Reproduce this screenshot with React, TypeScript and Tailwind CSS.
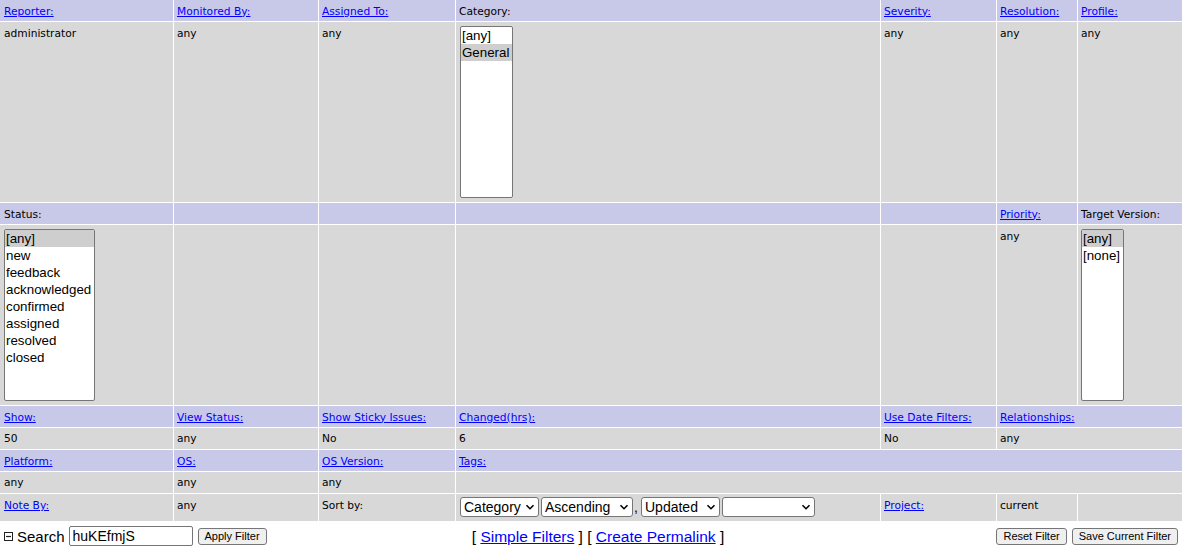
import React from 'react'

const head = 'bg-[#c8c8e8] flex items-center pl-[3px] pt-px'
const head0 = 'bg-[#c8c8e8] flex items-center pl-1 pt-px'
const cell = 'bg-[#d8d8d8] pl-[3px]'
const cell0 = 'bg-[#d8d8d8] pl-1'

function L({ children }: { children: React.ReactNode }) {
  return <a className="text-[#0000ff] underline cursor-pointer">{children}</a>
}

function ListBox({ items, selected, width }: { items: string[]; selected: number; width: string }) {
  return (
    <div
      className={`${width} h-[172px] bg-white border border-[#767676] rounded-[2px] overflow-hidden text-[13.33px] leading-[17px] text-black`}
      style={{ fontFamily: '"Liberation Sans", Arial, sans-serif' }}
    >
      {items.map((it, i) => (
        <div key={it} className={`pl-[1px] whitespace-nowrap ${i === selected ? 'bg-[#cecece]' : ''}`}>
          {it}
        </div>
      ))}
    </div>
  )
}

function Drop({ label, width }: { label: string; width: string }) {
  return (
    <div
      className={`${width} h-[20px] bg-white border border-[#767676] rounded-[3px] flex items-center justify-between pl-[3px] pr-[3px] text-[14px] text-black`}
      style={{ fontFamily: '"Liberation Sans", Arial, sans-serif' }}
    >
      <span className="whitespace-nowrap">{label}</span>
      <svg width="10" height="10" viewBox="0 0 10 10" className="flex-none">
        <path d="M1.5 3.2 L5 6.7 L8.5 3.2" fill="none" stroke="#000" strokeWidth="1.6" />
      </svg>
    </div>
  )
}

function Btn({ children }: { children: React.ReactNode }) {
  return (
    <button
      className="h-[17px] px-[6px] bg-[#efefef] border border-[#767676] rounded-[3px] text-[11px] leading-none text-black"
      style={{ fontFamily: '"Liberation Sans", Arial, sans-serif' }}
    >
      {children}
    </button>
  )
}

export default function App() {
  return (
    <div
      className="w-[1182px] h-[551px] bg-white text-black text-[10.67px] leading-[13px] overflow-hidden"
      style={{ fontFamily: '"DejaVu Sans", Verdana, sans-serif' }}
    >
      <div className="grid grid-cols-[173px_144px_136px_424px_115px_80px_1fr] grid-rows-[21px_180px_21px_180px_21px_21px_21px_21px_27px] gap-px bg-white">
        {/* row 1 */}
        <div className={head0}><L>Reporter:</L></div>
        <div className={head}><L>Monitored By:</L></div>
        <div className={head}><L>Assigned To:</L></div>
        <div className={head}>Category:</div>
        <div className={head}><L>Severity:</L></div>
        <div className={head}><L>Resolution:</L></div>
        <div className={head}><L>Profile:</L></div>

        <div className={`${cell0} pt-[5px]`}>administrator</div>
        <div className={`${cell} pt-[5px]`}>any</div>
        <div className={`${cell} pt-[5px]`}>any</div>
        <div className={`${cell} pt-[4px] pl-[4px]`}>
          <ListBox items={['[any]', 'General']} selected={1} width="w-[53px]" />
        </div>
        <div className={`${cell} pt-[5px]`}>any</div>
        <div className={`${cell} pt-[5px]`}>any</div>
        <div className={`${cell} pt-[5px]`}>any</div>

        {/* row 2 */}
        <div className={head0}>Status:</div>
        <div className={head} />
        <div className={head} />
        <div className={head} />
        <div className={head} />
        <div className={head}><L>Priority:</L></div>
        <div className={head}>Target Version:</div>

        <div className={`${cell0} pt-[4px]`}>
          <ListBox
            items={['[any]', 'new', 'feedback', 'acknowledged', 'confirmed', 'assigned', 'resolved', 'closed']}
            selected={0}
            width="w-[91px]"
          />
        </div>
        <div className={cell} />
        <div className={cell} />
        <div className={cell} />
        <div className={cell} />
        <div className={`${cell} pt-[5px]`}>any</div>
        <div className={`${cell} pt-[4px]`}>
          <ListBox items={['[any]', '[none]']} selected={0} width="w-[43px]" />
        </div>

        {/* row 3 */}
        <div className={head0}><L>Show:</L></div>
        <div className={head}><L>View Status:</L></div>
        <div className={head}><L>Show Sticky Issues:</L></div>
        <div className={head}><L>Changed(hrs):</L></div>
        <div className={head}><L>Use Date Filters:</L></div>
        <div className={`${head} col-span-2`}><L>Relationships:</L></div>

        <div className={`${cell0} flex items-center`}>50</div>
        <div className={`${cell} flex items-center`}>any</div>
        <div className={`${cell} flex items-center`}>No</div>
        <div className={`${cell} flex items-center`}>6</div>
        <div className={`${cell} flex items-center`}>No</div>
        <div className={`${cell} col-span-2 flex items-center`}>any</div>

        {/* row 4 */}
        <div className={head0}><L>Platform:</L></div>
        <div className={head}><L>OS:</L></div>
        <div className={head}><L>OS Version:</L></div>
        <div className={`${head} col-span-4`}><L>Tags:</L></div>

        <div className={`${cell0} flex items-center`}>any</div>
        <div className={`${cell} flex items-center`}>any</div>
        <div className={`${cell} flex items-center`}>any</div>
        <div className={`${cell} col-span-4`} />

        {/* row 5 */}
        <div className={`${cell0} pt-[5px]`}><L>Note By:</L></div>
        <div className={`${cell} pt-[5px]`}>any</div>
        <div className={`${cell} pt-[5px]`}>Sort by:</div>
        <div className={`${cell} pt-[3px] pl-[4px] flex items-start`}>
          <Drop label="Category" width="w-[79px]" />
          <div className="w-[2px]" />
          <Drop label="Ascending" width="w-[92px]" />
          <span className="text-[14px] leading-[20px] w-[8px] pl-[1px]" style={{ fontFamily: '"Liberation Sans", Arial, sans-serif' }}>,</span>
          <Drop label="Updated" width="w-[79px]" />
          <div className="w-[2px]" />
          <Drop label="" width="w-[93px]" />
        </div>
        <div className={`${cell} pt-[5px]`}><L>Project:</L></div>
        <div className={`${cell} pt-[5px]`}>current</div>
        <div className={cell} />
      </div>

      {/* bottom bar */}
      <div
        className="h-[30px] grid grid-cols-[1fr_auto_1fr] items-center text-[15px]"
        style={{ fontFamily: '"Liberation Sans", Arial, sans-serif' }}
      >
        <div className="flex items-center pl-1">
          <svg width="9" height="9" viewBox="0 0 9 9" className="flex-none mt-[1px]">
            <rect x="0.5" y="0.5" width="8" height="8" fill="none" stroke="#222" strokeWidth="1" />
            <path d="M2 4.5 H7" stroke="#222" strokeWidth="1.2" />
          </svg>
          <span className="ml-[4px]">Search</span>
          <div className="ml-[4px] w-[124px] h-[20px] border border-[#767676] rounded-[2px] flex items-center pl-[3px] text-[14px]">
            huKEfmjS
          </div>
          <div className="ml-[5px] flex items-center">
            <Btn>Apply Filter</Btn>
          </div>
        </div>
        <div className="pl-[14px] whitespace-nowrap text-[15.5px]">
          [ <a className="text-[#0000ff] underline">Simple Filters</a> ] [ <a className="text-[#0000ff] underline">Create Permalink</a> ]
        </div>
        <div className="flex justify-end items-center gap-[5px] pr-1">
          <Btn>Reset Filter</Btn>
          <Btn>Save Current Filter</Btn>
        </div>
      </div>
    </div>
  )
}
